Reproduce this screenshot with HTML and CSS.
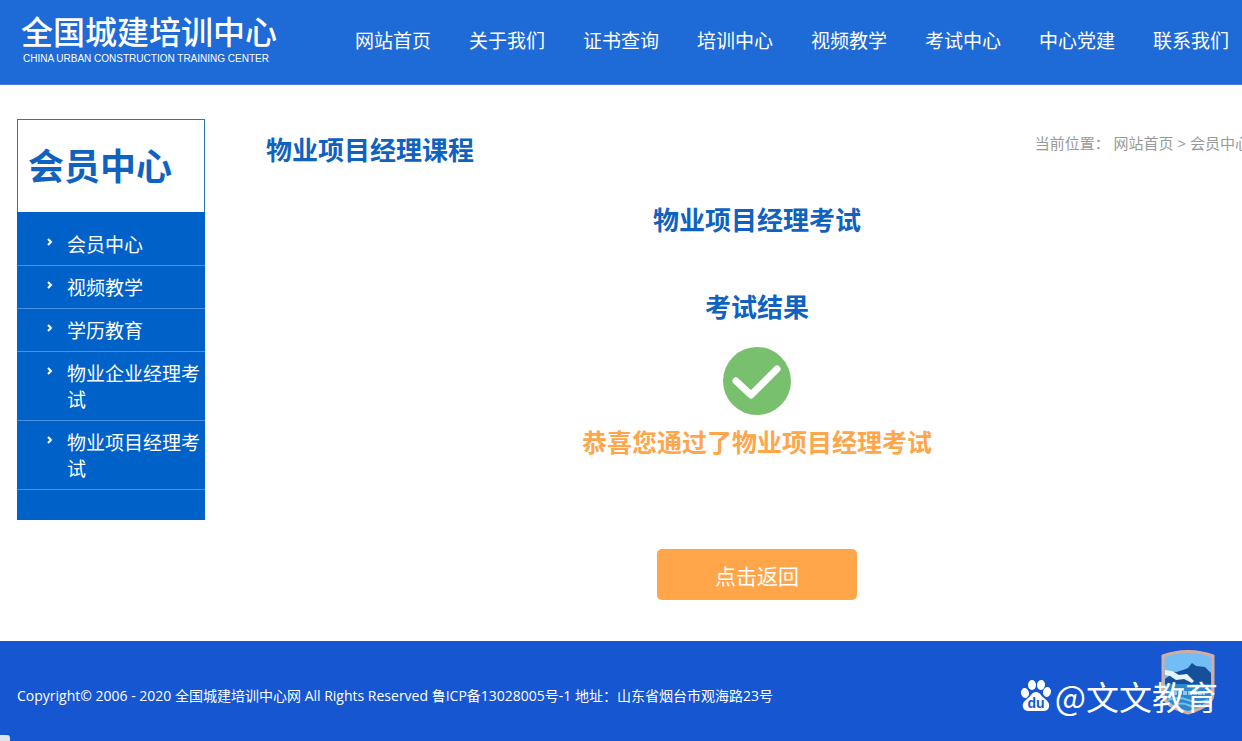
FILE: index.html
```html
<!DOCTYPE html>
<html lang="zh-CN">
<head>
    <meta charset="UTF-8">
    <meta name="viewport" content="width=device-width, initial-scale=1.0">
    <title>物业项目经理考试</title>
    <link rel="stylesheet" href="styles.css">
</head>
<body>
    <!-- 头部 -->
    <header class="header">
        <a href="#" class="logo">
            <span class="logo-cn">全国城建培训中心</span>
            <span class="logo-en">CHINA URBAN CONSTRUCTION TRAINING CENTER</span>
        </a>
        <nav class="nav">
            <a href="#">网站首页</a>
            <a href="#">关于我们</a>
            <a href="#">证书查询</a>
            <a href="#">培训中心</a>
            <a href="#">视频教学</a>
            <a href="#">考试中心</a>
            <a href="#">中心党建</a>
            <a href="#">联系我们</a>
        </nav>
    </header>

    <div class="container">
        <!-- 左侧菜单 -->
        <aside class="sidebar">
            <h2 class="side-title">会员中心</h2>
            <ul class="side-list">
                <li><svg class="arrow" viewBox="0 0 6 8"><path d="M1 1l3 3-3 3"/></svg><a href="#">会员中心</a></li>
                <li><svg class="arrow" viewBox="0 0 6 8"><path d="M1 1l3 3-3 3"/></svg><a href="#">视频教学</a></li>
                <li><svg class="arrow" viewBox="0 0 6 8"><path d="M1 1l3 3-3 3"/></svg><a href="#">学历教育</a></li>
                <li><svg class="arrow" viewBox="0 0 6 8"><path d="M1 1l3 3-3 3"/></svg><a href="#">物业企业经理考试</a></li>
                <li><svg class="arrow" viewBox="0 0 6 8"><path d="M1 1l3 3-3 3"/></svg><a href="#">物业项目经理考试</a></li>
            </ul>
        </aside>

        <!-- 右侧内容 -->
        <main class="main">
            <div class="main-top">
                <h1 class="title">物业项目经理课程</h1>
                <div class="position">当前位置： <a href="#">网站首页</a> &gt; <a href="#">会员中心</a></div>
            </div>
            <div class="result">
                <h2 class="title">物业项目经理考试</h2>
                <h3 class="title result-title">考试结果</h3>
                <svg class="ok" viewBox="0 0 68 68">
                    <circle cx="34" cy="34" r="34" fill="#78c06e"/>
                    <path d="M13 34l15 14 26-26" fill="none" stroke="#fff" stroke-width="7" stroke-linecap="round" stroke-linejoin="round"/>
                </svg>
                <p class="pass">恭喜您通过了物业项目经理考试</p>
                <button class="back" type="button">点击返回</button>
            </div>
        </main>
    </div>

    <!-- 底部 -->
    <footer class="footer">
        <p>Copyright© 2006 - 2020 全国城建培训中心网 All Rights Reserved 鲁ICP备13028005号-1 地址：山东省烟台市观海路23号</p>
        <svg class="badge" viewBox="0 0 54 65">
            <path d="M2 6Q27-3 52 6V44Q52 56 27 63Q2 56 2 44Z" fill="#72bdf5" stroke="#d3aea0" stroke-width="3"/>
            <path d="M4 29L12 23 22 20 27 18 31 13 35 16 44 17 50 23V37H4Z" fill="#17509a"/>
            <path d="M4 20l7 1 7 4 8-1 7 7-2 2-8-4-8 1-6-4-5-1z" fill="#e6f4ff"/>
            <path d="M4 34H50V44Q49 54 27 61Q5 54 4 44Z" fill="#2b88ca"/>
            <path d="M12 43H44" fill="none" stroke="#8fc8ec" stroke-width="4" stroke-dasharray="4 1"/>
            <path d="M7 50q10-4 20 0t20 0M14 55q7-3 13 0t13 0" fill="none" stroke="#77bfe8" stroke-width="2"/>
        </svg>
        <div class="mark">
            <svg class="paw" viewBox="0 0 30 32">
                <g fill="#fff">
                    <ellipse cx="4" cy="13" rx="4" ry="5" transform="rotate(-12 4 13)"/>
                    <ellipse cx="11" cy="5" rx="4" ry="5"/>
                    <ellipse cx="20" cy="5" rx="4" ry="5" transform="rotate(8 20 5)"/>
                    <ellipse cx="26" cy="12" rx="4" ry="5" transform="rotate(12 26 12)"/>
                    <path d="M15 12c4 0 5 4 8 6 4 3 6 6 5 9-1 5-7 4-13 4s-12 1-13-4c-1-3 1-6 5-9 3-2 4-6 8-6z"/>
                </g>
                <text x="15" y="28" class="paw-text">du</text>
            </svg>
            <span>@文文教育</span>
        </div>
        <div class="status"></div>
    </footer>
</body>
</html>
```
FILE: styles.css
```css
* {
    box-sizing: border-box;
    margin: 0;
    padding: 0;
}

body {
    font-family: "Open Sans", "Noto Sans CJK SC", sans-serif;
    font-size: 14px;
    background-color: #fff;
    overflow-x: hidden;
}

a {
    color: inherit;
    text-decoration: none;
}

ul {
    list-style: none;
}

/* 头部 */
.header {
    display: flex;
    align-items: center;
    justify-content: space-between;
    height: 85px;
    padding: 0 13px 2px 21px;
    background-color: #1e6ad6;
    border-bottom: 1px solid #4a80d8;
    color: #fff;
}

.logo-cn {
    display: block;
    font-size: 32px;
    font-weight: 500;
    line-height: 36px;
}

.logo-en {
    display: block;
    padding-left: 2px;
    font-family: "Liberation Sans", Arial, sans-serif;
    font-size: 10px;
    line-height: 18px;
    white-space: nowrap;
}

.nav {
    display: flex;
    gap: 38px;
    font-size: 19px;
    line-height: 28px;
    white-space: nowrap;
}

/* 主体 */
.container {
    display: flex;
    align-items: flex-start;
    gap: 61px;
    padding: 34px 0 41px 17px;
}

.sidebar {
    flex: 0 0 188px;
    background-color: #0062c9;
}

.side-title {
    padding: 21px 10px 19px;
    background-color: #fff;
    border: 1px solid #2b78ae;
    border-bottom: none;
    color: #0f62c0;
    font-size: 36px;
    line-height: 52px;
}

.side-list {
    padding: 11px 0 30px;
    color: #fff;
}

.side-list li {
    display: flex;
    align-items: flex-start;
    gap: 14px;
    padding: 9px 0 7px 30px;
    border-bottom: 1px solid #4a93e0;
    font-size: 19px;
    line-height: 26px;
}

.arrow {
    flex: none;
    width: 6px;
    height: 8px;
    margin-top: 6px;
    fill: none;
    stroke: #fff;
    stroke-width: 2;
}

/* 内容区比窗口略宽 */
.main {
    flex: 1;
    margin-right: -8px;
}

.main-top {
    display: flex;
    justify-content: space-between;
    padding-top: 11px;
}

.title {
    color: #0f62c0;
    font-size: 26px;
    line-height: 40px;
}

.position {
    color: #999;
    font-size: 15px;
    line-height: 26px;
    white-space: nowrap;
}

.result {
    display: flex;
    flex-direction: column;
    align-items: center;
    padding: 30px 2px 0 0;
}

.result-title {
    margin: 47px 0 20px;
}

.ok {
    width: 68px;
    height: 68px;
}

.pass {
    padding-top: 7px;
    color: #ffa54a;
    font-size: 25px;
    font-weight: bold;
    line-height: 40px;
}

.back {
    width: 200px;
    height: 51px;
    margin-top: 87px;
    border: none;
    border-radius: 5px;
    background-color: #ffa64b;
    color: #fff;
    font-family: inherit;
    font-size: 21px;
    cursor: pointer;
}

/* 底部 */
.footer {
    position: relative;
    padding: 45px 17px 35px;
    background-color: #1656d0;
    color: #fff;
    line-height: 20px;
}

.badge {
    position: absolute;
    right: 27px;
    top: 9px;
    width: 54px;
    height: 65px;
}

.mark {
    position: absolute;
    right: 24px;
    top: 35px;
    display: flex;
    align-items: center;
    gap: 4px;
    font-family: "Noto Sans CJK SC", sans-serif;
    font-size: 33px;
    line-height: 40px;
}

.paw {
    width: 30px;
    height: 32px;
}

.paw-text {
    fill: #1656d0;
    font-family: "Liberation Sans", Arial, sans-serif;
    font-size: 14px;
    font-weight: bold;
    text-anchor: middle;
}

.status {
    position: absolute;
    left: 0;
    bottom: 0;
    width: 10px;
    height: 6px;
    border-radius: 0 3px 0 0;
    background-color: #dfe3ea;
}
```
